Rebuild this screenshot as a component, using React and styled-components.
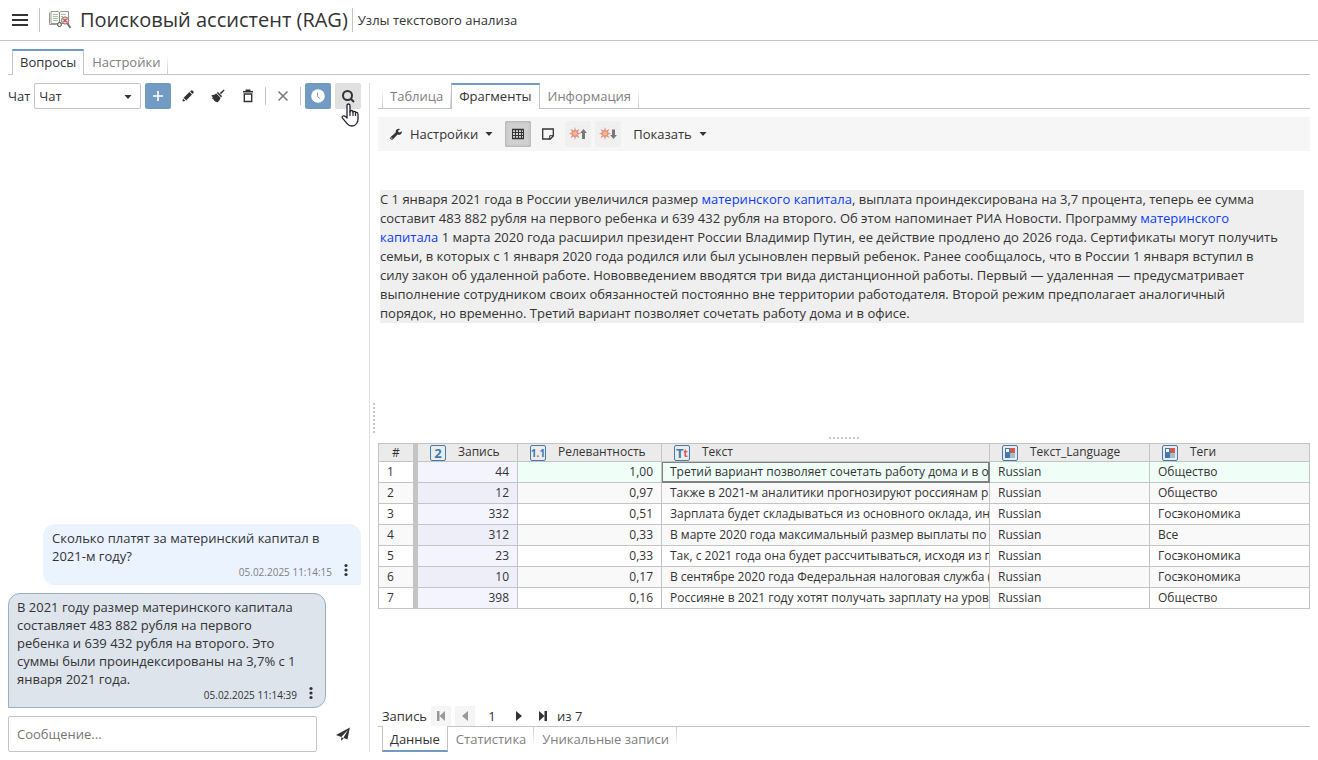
import React, { useState } from "react";
import styled, { createGlobalStyle, css } from "styled-components";

const GlobalStyle = createGlobalStyle`
  * {
    box-sizing: border-box;
  }
  html, body, #root {
    height: 100%;
  }
  body {
    margin: 0;
    background: #fff;
    color: #333;
    font-family: "Open Sans", "Noto Sans", sans-serif;
    font-size: 13px;
    line-height: 18px;
  }
  button, input, select {
    font: inherit;
    color: inherit;
  }
`;

const PencilIcon = () => (
  <svg width="12" height="12" viewBox="0 0 12 12" fill="#333">
    <path d="M0.5 11.5L1 8.6 3.4 11z" />
    <path d="M1.6 7.8L7.4 2 10 4.6 4.2 10.4z" />
    <path d="M8.1 1.4L9.2 0.4Q9.9 0 10.5 0.6L11.4 1.5Q12 2.1 11.6 2.8L10.6 3.9z" />
  </svg>
);

const BrushIcon = () => (
  <svg width="14" height="14" viewBox="0 0 14 14" fill="#333">
    <path d="M12.800 0.600l.8.8-3.600 3.800-1.200-1.200z" />
    <path d="M6.700 2.800L11.200 7.300 10 8.200 5.900 4.100z" />
    <path d="M5.300 4.500L9.600 8.800Q8.800 11.600 6.800 13.200 5.500 13.400 4.300 12.400L3.200 11.500 2.300 10.200 1 9.400 1.800 8.600 0.300 6.200Q3.500 6 5.300 4.500z" />
  </svg>
);

const TrashIcon = () => (
  <svg width="12" height="14" viewBox="0 0 12 14" fill="none" stroke="#333" strokeWidth="1.400">
    <path d="M1 2.700H11M4.200 2V1.200H7.800V2M2.300 5V12.500H9.700V5M1.600 5H10.400" />
  </svg>
);

const CrossIcon = () => (
  <svg width="12" height="12" viewBox="0 0 12 12" stroke="#777" strokeWidth="1.500">
    <path d="M1.500 1.500l9 9M10.500 1.500l-9 9" />
  </svg>
);

const PlusIcon = () => (
  <svg width="12" height="12" viewBox="0 0 12 12" stroke="#fff" strokeWidth="1.600">
    <path d="M6 1v10M1 6h10" />
  </svg>
);

const ClockIcon = () => (
  <svg width="14" height="14" viewBox="0 0 14 14">
    <circle cx="7" cy="7" r="6.800" fill="#fff" />
    <path d="M6.500 3.500V7.500L9 9.500" fill="none" stroke="#729bc4" />
  </svg>
);

const SearchIcon = () => (
  <svg width="14" height="14" viewBox="0 0 14 14" fill="none" stroke="#333" strokeWidth="2">
    <circle cx="6.500" cy="6.500" r="4.500" />
    <path d="M9.700 9.700l3.300 3.300" />
  </svg>
);

const HandIcon = () => (
  <svg width="18" height="24" viewBox="0 0 18 24">
    <path
      d="M6 15V3Q6 1 7.500 1T9 3V9Q9 7.500 10.500 7.500T12 9.200Q12 8.300 13.300 8.300T14.500 10Q14.700 9.200 15.800 9.400 17 9.600 17 11.500V16Q17 18.500 15.600 20.500 14 23 11 23 8 23 6.300 20.800L1.300 14.800Q0.800 13.500 2 13 3.200 12.500 4.500 13.600z"
      fill="#fff"
      stroke="#223"
      strokeWidth="1.300"
      strokeLinejoin="round"
    />
    <path d="M9 8.500v4.500M12 9v4M14.500 10v3" stroke="#223" strokeWidth="1.200" />
  </svg>
);

const CaretIcon = () => (
  <svg width="8" height="4" viewBox="0 0 8 4" fill="#333">
    <path d="M0.500 0h7L4 4z" />
  </svg>
);

const WrenchIcon = () => (
  <svg width="14" height="14" viewBox="0 0 14 14" fill="#333">
    <path d="M12.900 4.200L10.800 5.600 9.300 5 9.200 3.500 11.300 2Q9.300 1.200 7.600 2.600 6.400 3.800 6.700 5.400L1.700 9.900Q0.600 11.200 1.600 12.300 2.800 13.300 4 12.200L8.500 7.600Q10.500 8.200 12 6.900 13.200 5.700 12.900 4.200zM2.800 10.600a.6.6 0 1 1 0 1.200.6.6 0 0 1 0-1.200z" />
  </svg>
);

const GridIcon = () => (
  <svg width="14" height="12" viewBox="0 0 14 12" fill="none" stroke="#333">
    <path d="M1 1.500H13M1 10.500H13" strokeWidth="1.400" />
    <path d="M1.500 1.500V10.500M12.500 1.500V10.500M1 4.500H13M1 7.500H13M4.500 1.500V10.500M7.500 1.500V10.500M10.500 1.500V10.500" />
  </svg>
);

const NoteIcon = () => (
  <svg width="12" height="12" viewBox="0 0 12 12">
    <path d="M0.700 1H11.300V8L8.300 11H0.700z" fill="none" stroke="#333" strokeWidth="1.300" />
    <path d="M7.700 11.500V7.700H11.500" fill="none" stroke="#333" />
  </svg>
);

const SparkIcon = ({ down }) => (
  <svg width="18" height="14" viewBox="0 0 18 14">
    <path
      d="M6 0l1 3.500L10.500 2 8.800 5.200 12 6.500 8.800 7.800 10.500 11 7 9.500 6 13 5 9.500 1.500 11 3.200 7.800 0 6.500 3.200 5.200 1.500 2 5 3.500z"
      fill="#e09484"
    />
    <circle cx="6" cy="6.500" r="2" fill="#f3b98a" />
    {down ? (
      <path d="M13 2.500h3v5.500h1.900L14.500 12 11.100 8H13z" fill="#777" />
    ) : (
      <path d="M13 12h3V6h1.900L14.500 2 11.100 6H13z" fill="#777" />
    )}
  </svg>
);

const DotsIcon = () => (
  <svg width="4" height="14" viewBox="0 0 4 14" fill="#333">
    <circle cx="2" cy="2.500" r="1.600" />
    <circle cx="2" cy="7" r="1.600" />
    <circle cx="2" cy="11.500" r="1.600" />
  </svg>
);

const SendIcon = () => (
  <svg width="14" height="14" viewBox="0 0 14 14" fill="#333">
    <path d="M13.900 0.500L11.400 12.600 7.400 10.700 12 3 5.200 10 0 7.900z" />
    <path d="M5.200 10.200L7.600 11.300 5.200 13.900z" />
  </svg>
);

const RagIcon = () => (
  <svg width="24" height="20" viewBox="0 0 24 20">
    <path d="M1.500 2.500V14.500H10L11.500 16" fill="none" stroke="#999" />
    <path d="M3 1.500H10L11.500 2.500 13 1.500H20.500V13.500H3z" fill="#f7faf5" stroke="#999" />
    <path d="M11.500 2.500V14" stroke="#888" />
    <path d="M5 4.500H10M5 6.500H10M5 8.500H10M5 10.500H10M13 4.500H18M13 6.500H15" stroke="#a9c3a1" />
    <circle cx="11.500" cy="14.500" r="2" fill="#dfe8dc" stroke="#555" />
    <circle cx="17" cy="10.500" r="3.600" fill="#f6d9d9" stroke="#777" />
    <path d="M15.300 8.800l3.400 3.400M18.700 8.800l-3.400 3.400" stroke="#d9534f" strokeWidth="1.400" />
    <path d="M19.500 13.500L22.500 18" stroke="#777" strokeWidth="2" />
  </svg>
);

const CategoryIcon = () => (
  <svg width="12" height="12" viewBox="0 0 12 12">
    <rect x="1.500" y="1.500" width="4" height="4" fill="#fff" stroke="#3f7cac" />
    <rect x="6" y="1" width="5" height="5" fill="#d9534f" />
    <rect x="1" y="6" width="5" height="5" fill="#3f7cac" />
    <rect x="6" y="6" width="5" height="5" fill="#9fbdd3" />
  </svg>
);

const StepIcon = ({ flip, bar }) => (
  <svg width="10" height="12" viewBox="0 0 10 12" fill="currentColor">
    <g transform={flip ? "matrix(-1 0 0 1 10 0)" : undefined}>
      <path d={bar ? "M1 1l5.500 5L1 11zM6.500 1H9V11H6.500z" : "M2 1l6 5-6 5z"} />
    </g>
  </svg>
);

const records = [
  ["44", "1,00", "Третий вариант позволяет сочетать работу дома и в о", "Общество"],
  ["12", "0,97", "Также в 2021-м аналитики прогнозируют россиянам р", "Общество"],
  ["332", "0,51", "Зарплата будет складываться из основного оклада, ин", "Госэкономика"],
  ["312", "0,33", "В марте 2020 года максимальный размер выплаты по", "Все"],
  ["23", "0,33", "Так, с 2021 года она будет рассчитываться, исходя из п", "Госэкономика"],
  ["10", "0,17", "В сентябре 2020 года Федеральная налоговая служба (", "Госэкономика"],
  ["398", "0,16", "Россияне в 2021 году хотят получать зарплату на уров", "Общество"],
];

const Tabs = ({ items, initial, bottom }) => {
  const [active, setActive] = useState(initial);
  return (
    <StTabs $bottom={bottom} role="tablist">
      {items.map((item, i) => (
        <StTab
          key={item}
          role="tab"
          aria-selected={i === active}
          $active={i === active}
          $bottom={bottom}
          $first={i === 0}
          onClick={() => setActive(i)}
        >
          {item}
        </StTab>
      ))}
    </StTabs>
  );
};

const Message = ({ own, time, children }) => (
  <StMessage $own={own}>
    <p>{children}</p>
    <footer>
      <time>{time}</time>
      <button aria-label="Меню сообщения">
        <DotsIcon />
      </button>
    </footer>
  </StMessage>
);

const ChatPanel = () => (
  <StChat>
    <StToolbar>
      <label htmlFor="chat">Чат</label>
      <StSelect>
        <select id="chat">
          <option>Чат</option>
        </select>
        <CaretIcon />
      </StSelect>
      <StIconButton $variant="primary" aria-label="Добавить">
        <PlusIcon />
      </StIconButton>
      <StIconButton aria-label="Изменить">
        <PencilIcon />
      </StIconButton>
      <StIconButton aria-label="Очистить">
        <BrushIcon />
      </StIconButton>
      <StIconButton aria-label="Удалить">
        <TrashIcon />
      </StIconButton>
      <StDivider />
      <StIconButton aria-label="Остановить">
        <CrossIcon />
      </StIconButton>
      <StDivider />
      <StIconButton $variant="primary" aria-label="История">
        <ClockIcon />
      </StIconButton>
      <StIconButton $variant="hover" aria-label="Поиск">
        <SearchIcon />
        <StPointer>
          <HandIcon />
        </StPointer>
      </StIconButton>
    </StToolbar>
    <StMessages>
      <Message own time="05.02.2025 11:14:15">
        Сколько платят за материнский капитал в 2021-м году?
      </Message>
      <Message time="05.02.2025 11:14:39">
        В 2021 году размер материнского капитала составляет 483 882 рубля на первого ребенка и 639 432
        рубля на второго. Это суммы были проиндексированы на 3,7% с 1 января 2021 года.
      </Message>
    </StMessages>
    <StComposer>
      <input aria-label="Сообщение" placeholder="Сообщение..." />
      <StIconButton aria-label="Отправить">
        <SendIcon />
      </StIconButton>
    </StComposer>
  </StChat>
);

const RecordTable = () => (
  <StTable>
    <colgroup>
      <col width="40" />
      <col width="100" />
      <col width="144" />
      <col />
      <col width="160" />
      <col width="160" />
    </colgroup>
    <thead>
      <tr>
        <th>#</th>
        <th>
          <StHead>
            <StType>2</StType>Запись
          </StHead>
        </th>
        <th>
          <StHead>
            <StType $small>
              1<i>.</i>1
            </StType>
            Релевантность
          </StHead>
        </th>
        <th>
          <StHead>
            <StType>
              T<i>t</i>
            </StType>
            Текст
          </StHead>
        </th>
        <th>
          <StHead>
            <StType>
              <CategoryIcon />
            </StType>
            Текст_Language
          </StHead>
        </th>
        <th>
          <StHead>
            <StType>
              <CategoryIcon />
            </StType>
            Теги
          </StHead>
        </th>
      </tr>
    </thead>
    <tbody>
      {records.map(([id, score, text, tag], i) => (
        <StRow key={id} $current={i === 0}>
          <td>{i + 1}</td>
          <td>{id}</td>
          <td>{score}</td>
          <td>{text}</td>
          <td>Russian</td>
          <td>{tag}</td>
        </StRow>
      ))}
    </tbody>
  </StTable>
);

const ResultPanel = () => (
  <StResult>
    <Tabs items={["Таблица", "Фрагменты", "Информация"]} initial={1} />
    <StResultToolbar>
      <StMenuButton>
        <WrenchIcon />
        Настройки
        <CaretIcon />
      </StMenuButton>
      <StIconButton $variant="pressed" aria-label="Таблица">
        <GridIcon />
      </StIconButton>
      <StIconButton aria-label="Форма">
        <NoteIcon />
      </StIconButton>
      <StIconButton $variant="muted" aria-label="Предыдущее совпадение">
        <SparkIcon />
      </StIconButton>
      <StIconButton $variant="muted" aria-label="Следующее совпадение">
        <SparkIcon down />
      </StIconButton>
      <StMenuButton>
        Показать
        <CaretIcon />
      </StMenuButton>
    </StResultToolbar>
    <StFragment>
      <p>
        С 1 января 2021 года в России увеличился размер <mark>материнского капитала</mark>, выплата
        проиндексирована на 3,7 процента, теперь ее сумма
        <br />
        составит 483 882 рубля на первого ребенка и 639 432 рубля на второго. Об этом напоминает РИА
        Новости. Программу <mark>материнского</mark>
        <br />
        <mark>капитала</mark> 1 марта 2020 года расширил президент России Владимир Путин, ее действие
        продлено до 2026 года. Сертификаты могут получить
        <br />
        семьи, в которых с 1 января 2020 года родился или был усыновлен первый ребенок. Ранее сообщалось,
        что в России 1 января вступил в
        <br />
        силу закон об удаленной работе. Нововведением вводятся три вида дистанционной работы. Первый —
        удаленная — предусматривает
        <br />
        выполнение сотрудником своих обязанностей постоянно вне территории работодателя. Второй режим
        предполагает аналогичный
        <br />
        порядок, но временно. Третий вариант позволяет сочетать работу дома и в офисе.
      </p>
    </StFragment>
    <StSplitter />
    <StGridArea>
      <RecordTable />
    </StGridArea>
    <StPager>
      <span>Запись</span>
      <button disabled aria-label="Первая">
        <StepIcon flip bar />
      </button>
      <button disabled aria-label="Предыдущая">
        <StepIcon flip />
      </button>
      <input aria-label="Номер записи" defaultValue="1" />
      <button aria-label="Следующая">
        <StepIcon />
      </button>
      <button aria-label="Последняя">
        <StepIcon bar />
      </button>
      <span>из 7</span>
    </StPager>
    <Tabs items={["Данные", "Статистика", "Уникальные записи"]} initial={0} bottom />
  </StResult>
);

const App = () => (
  <>
    <GlobalStyle />
    <StPage>
      <StHeader>
        <StMenu aria-label="Меню">
          <i />
          <i />
          <i />
        </StMenu>
        <StTitle>
          <RagIcon />
          <h1>Поисковый ассистент (RAG)</h1>
        </StTitle>
        <span>Узлы текстового анализа</span>
      </StHeader>
      <StMainTabs>
        <Tabs items={["Вопросы", "Настройки"]} initial={0} />
      </StMainTabs>
      <StBody>
        <ChatPanel />
        <StGutter />
        <ResultPanel />
      </StBody>
    </StPage>
  </>
);

export default App;

const StPage = styled.div`
  height: 100%;
  display: flex;
  flex-direction: column;
`;

const StHeader = styled.header`
  height: 41px;
  flex: none;
  display: flex;
  align-items: center;
  padding-left: 12px;
  border-bottom: 1px solid #c4c4c4;
`;

const StMenu = styled.button`
  display: flex;
  flex-direction: column;
  gap: 3px;
  width: 16px;
  padding: 0;
  border: 0;
  background: none;
  i {
    height: 2px;
    background: #333;
  }
`;

const StTitle = styled.div`
  display: flex;
  align-items: center;
  gap: 8px;
  height: 24px;
  margin: 0 5px 0 11px;
  padding: 0 4px 0 8px;
  border: solid #c4c4c4;
  border-width: 0 1px;
  h1 {
    margin: 0;
    font-size: 20px;
    line-height: 24px;
    font-weight: 400;
  }
`;

const StMainTabs = styled.nav`
  flex: none;
  padding: 8px 8px 0;
`;

const StTabs = styled.div`
  flex: none;
  display: flex;
  height: 26px;
  padding-left: 4px;
  ${({ $bottom }) =>
    $bottom
      ? css`
          box-shadow: inset 0 1px #c4c4c4;
        `
      : css`
          box-shadow: inset 0 -1px #c4c4c4;
        `}
`;

const StTab = styled.button`
  padding: ${({ $bottom }) => ($bottom ? "1px 7px 2px" : "2px 7px")};
  border: 0 solid transparent;
  border-width: 0 1px;
  background: none;
  color: #808080;
  ${({ $active, $bottom, $first }) =>
    $active
      ? css`
          color: #333;
          background: #fff;
          border: 1px solid #c4c4c4;
          ${$bottom
            ? css`
                border-top: 0;
                border-bottom: 2px solid #729bc4;
                padding-bottom: 0;
              `
            : css`
                border-bottom: 0;
                border-top: 2px solid #729bc4;
                padding-top: 0;
              `}
        `
      : css`
          border-image: linear-gradient(${$bottom ? "to top" : "to bottom"}, #fff 25%, #c4c4c4) 1;
          border-left-width: ${$first ? "1px" : "0"};
          padding-left: ${$first ? "7px" : "8px"};
        `}
`;

const StBody = styled.div`
  flex: 1;
  min-height: 0;
  display: flex;
  padding: 8px;
`;

const StChat = styled.section`
  width: 362px;
  flex: none;
  display: flex;
  flex-direction: column;
  padding-right: 8px;
  border-right: 1px solid #dcdfe6;
`;

const StToolbar = styled.div`
  display: flex;
  align-items: center;
  gap: 4px;
  label {
    flex: none;
  }
`;

const StSelect = styled.div`
  flex: 1;
  position: relative;
  select {
    width: 100%;
    height: 26px;
    padding: 0 4px;
    border: 1px solid #c4c4c4;
    border-radius: 2px;
    background: #fff;
    appearance: none;
  }
  svg {
    position: absolute;
    right: 9px;
    top: 12px;
    pointer-events: none;
  }
`;

const variants = {
  primary: "#729bc4",
  hover: "#e0e0e0",
  pressed: "#d0d0d0",
  muted: "#f0f0f0",
};

const StIconButton = styled.button`
  position: relative;
  flex: none;
  display: flex;
  align-items: center;
  justify-content: center;
  width: 26px;
  height: 26px;
  padding: 0;
  border: 0;
  border-radius: 2px;
  background: ${({ $variant }) => variants[$variant] || "none"};
  ${({ $variant }) =>
    $variant === "pressed" &&
    css`
      box-shadow: inset 0 0 3px #999;
    `}
`;

const StPointer = styled.span`
  position: absolute;
  left: 6px;
  top: 20px;
  height: 24px;
  pointer-events: none;
`;

const StDivider = styled.i`
  width: 1px;
  height: 18px;
  background: #c4c4c4;
`;

const StMessages = styled.div`
  flex: 1;
  display: flex;
  flex-direction: column;
  justify-content: flex-end;
  gap: 8px;
`;

const StMessage = styled.article`
  width: 318px;
  border-radius: 12px;
  p {
    margin: 0;
    padding-right: 10px;
  }
  footer {
    display: flex;
    justify-content: flex-end;
    align-items: flex-start;
    gap: 12px;
    height: 16px;
  }
  time {
    font-size: 10px;
    line-height: 14px;
  }
  button {
    display: flex;
    margin-top: -2px;
    padding: 0;
    border: 0;
    background: none;
  }
  ${({ $own }) =>
    $own
      ? css`
          align-self: flex-end;
          padding: 5px 13px 4px 9px;
          background: #eaf3ff;
          border-bottom-right-radius: 0;
          time {
            color: #808080;
          }
        `
      : css`
          padding: 4px 12px 3px 8px;
          background: #dde4ec;
          border: 1px solid #98afc9;
          border-bottom-left-radius: 0;
        `}
`;

const StComposer = styled.form`
  display: flex;
  align-items: center;
  gap: 13px;
  margin-top: 8px;
  padding-right: 5px;
  input {
    flex: 1;
    min-width: 0;
    height: 36px;
    padding: 0 8px;
    border: 1px solid #c4c4c4;
    border-radius: 2px;
    &::placeholder {
      color: #757575;
    }
  }
`;

const dots = "#c8c8c8 0 2px, transparent 2px 4px";

const StGutter = styled.div`
  flex: none;
  align-self: center;
  width: 2px;
  height: 30px;
  margin: 0 3px;
  background: repeating-linear-gradient(to bottom, ${dots});
`;

const StResult = styled.section`
  flex: 1;
  min-width: 0;
  display: flex;
  flex-direction: column;
`;

const StResultToolbar = styled.div`
  display: flex;
  align-items: center;
  gap: 4px;
  height: 34px;
  margin-top: 8px;
  padding-left: 3px;
  background: #f6f6f6;
`;

const StMenuButton = styled.button`
  display: flex;
  align-items: center;
  gap: 7px;
  height: 26px;
  padding: 0 8px;
  border: 0;
  background: none;
`;

const StFragment = styled.div`
  flex: 1;
  padding: 39px 6px 0 2px;
  p {
    margin: 0;
    background: #efefef;
    line-height: 19px;
  }
  mark {
    color: #0d3cff;
    background: none;
  }
`;

const StSplitter = styled.div`
  flex: none;
  align-self: center;
  width: 30px;
  height: 2px;
  margin-bottom: 4px;
  background: repeating-linear-gradient(to right, ${dots});
`;

const StGridArea = styled.div`
  flex: none;
  height: 263px;
`;

const StTable = styled.table`
  width: 100%;
  table-layout: fixed;
  border-spacing: 0;
  font-size: 12px;
  th,
  td {
    overflow: hidden;
    white-space: nowrap;
    border: 0 solid #c4c4c4;
    border-width: 0 1px 1px 0;
  }
  th {
    height: 19px;
    padding: 0;
    border-top-width: 1px;
    background: #ebebeb;
    font-weight: 400;
    line-height: 16px;
  }
  th:first-child,
  td:first-child {
    border-left-width: 1px;
    border-right-width: 5px;
  }
`;

const StHead = styled.div`
  display: flex;
  align-items: flex-start;
  gap: 12px;
  height: 17px;
  padding-left: 12px;
`;

const StType = styled.span`
  display: flex;
  align-items: center;
  justify-content: center;
  width: 16px;
  height: 16px;
  margin-top: 1px;
  border: 1px solid #3f7cac;
  border-radius: 2px;
  color: #3f7cac;
  font-size: ${({ $small }) => ($small ? "10px" : "13px")};
  line-height: 14px;
  font-weight: 700;
  i {
    color: #d9534f;
    font-size: 10px;
    font-style: normal;
  }
`;

const StRow = styled.tr`
  background: #fff;
  &:nth-child(even) {
    background: #f9f9f9;
  }
  td {
    height: 21px;
    padding: 0 8px;
    line-height: 20px;
  }
  td:nth-child(2),
  td:nth-child(3) {
    text-align: right;
  }
  td:nth-child(2) {
    background: #f4f4ff;
  }
  &:nth-child(even) td:nth-child(2) {
    background: #eeeef8;
  }
  td:nth-child(4) {
    padding-right: 0;
  }
  ${({ $current }) =>
    $current &&
    css`
      td:nth-child(n + 3) {
        background: #effff8;
      }
      td:nth-child(4) {
        border-color: #808080;
        box-shadow: inset 0 0 0 1px #808080;
      }
    `}
`;

const StPager = styled.div`
  display: flex;
  align-items: center;
  gap: 4px;
  height: 20px;
  padding-left: 4px;
  button {
    display: flex;
    align-items: center;
    justify-content: center;
    width: 20px;
    height: 20px;
    padding: 0;
    border: 0;
    background: none;
    &:disabled {
      color: #999;
      background: #f5f5f5;
    }
  }
  input {
    width: 26px;
    padding: 0;
    border: 0;
    text-align: center;
  }
`;
